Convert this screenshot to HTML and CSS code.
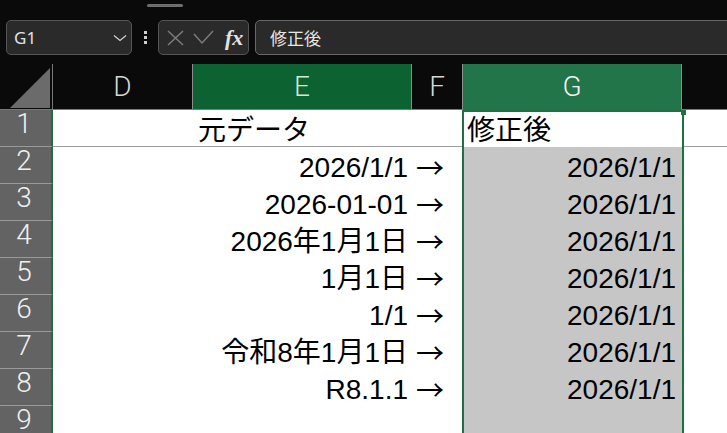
FILE: index.html
```html
<html lang="ja">
<head>
    <link rel="stylesheet" href="styles.css">
</head>
<body>
    <div class="top-edge"><span class="grip"></span></div>
    <div class="formula-row">
        <div class="name-box">
            <span>G1</span>
            <svg class="chevron" width="14" height="8" viewBox="0 0 14 8"><polyline points="1,1.5 7,6.5 13,1.5" /></svg>
        </div>
        <div class="more"><i></i><i></i><i></i></div>
        <div class="fn-buttons">
            <svg width="17" height="16" viewBox="0 0 17 16"><path d="M1 1 L16 15 M16 1 L1 15" /></svg>
            <svg width="21" height="15" viewBox="0 0 21 15"><polyline points="1,4 9,13 20,1" /></svg>
            <span class="fx">fx</span>
        </div>
        <div class="formula-input">修正後</div>
    </div>

    <div class="sheet">
        <div class="grid">
            <div class="corner"><svg width="40" height="40" viewBox="0 0 40 40"><polygon points="0,40 40,0 40,40" /></svg></div>
            <div class="col-head">D</div>
            <div class="col-head sel-dark">E</div>
            <div class="col-head">F</div>
            <div class="col-head sel-light">G</div>
            <div class="col-head last"></div>

            <div class="row-head">1</div>
            <div class="cell top"></div>
            <div class="cell top left">元データ</div>
            <div class="cell top"></div>
            <div class="cell active left">修正後</div>
            <div class="cell top"></div>

            <div class="row-head">2</div>
            <div class="cell"></div>
            <div class="cell right">2026/1/1</div>
            <div class="cell arrow">→</div>
            <div class="cell picked right">2026/1/1</div>
            <div class="cell"></div>

            <div class="row-head">3</div>
            <div class="cell"></div>
            <div class="cell right">2026-01-01</div>
            <div class="cell arrow">→</div>
            <div class="cell picked right">2026/1/1</div>
            <div class="cell"></div>

            <div class="row-head">4</div>
            <div class="cell"></div>
            <div class="cell right">2026年1月1日</div>
            <div class="cell arrow">→</div>
            <div class="cell picked right">2026/1/1</div>
            <div class="cell"></div>

            <div class="row-head">5</div>
            <div class="cell"></div>
            <div class="cell right">1月1日</div>
            <div class="cell arrow">→</div>
            <div class="cell picked right">2026/1/1</div>
            <div class="cell"></div>

            <div class="row-head">6</div>
            <div class="cell"></div>
            <div class="cell right">1/1</div>
            <div class="cell arrow">→</div>
            <div class="cell picked right">2026/1/1</div>
            <div class="cell"></div>

            <div class="row-head">7</div>
            <div class="cell"></div>
            <div class="cell right">令和8年1月1日</div>
            <div class="cell arrow">→</div>
            <div class="cell picked right">2026/1/1</div>
            <div class="cell"></div>

            <div class="row-head">8</div>
            <div class="cell"></div>
            <div class="cell right">R8.1.1</div>
            <div class="cell arrow">→</div>
            <div class="cell picked right">2026/1/1</div>
            <div class="cell"></div>

            <div class="row-head last-row">9</div>
            <div class="cell"></div>
            <div class="cell"></div>
            <div class="cell"></div>
            <div class="cell picked"></div>
            <div class="cell"></div>
        </div>
        <!-- selected column G outline -->
        <div class="selection"><span class="fill-handle"></span></div>
    </div>
</body>
</html>
```

FILE: styles.css
```css
body {
    margin: 0;
    width: 727px;
    height: 433px;
    overflow: hidden;
    background-color: #0a0a0a;
    font-family: "Liberation Sans", "Noto Sans CJK JP", sans-serif;
}
.top-edge {
    height: 20px;
}
.grip {
    display: block;
    width: 36px;
    height: 3px;
    margin-left: 147px;
    position: relative;
    top: 4px;
    background-color: #6e6e6e;
    border-radius: 2px;
}
.formula-row {
    display: flex;
    height: 35px;
    padding-left: 6px;
    margin-bottom: 9px;
}
.name-box,
.fn-buttons,
.formula-input {
    box-sizing: border-box;
    height: 35px;
    background-color: #2a2a2a;
    border: 1px solid #555;
    border-radius: 5px;
    display: flex;
    align-items: center;
}
.name-box {
    width: 126px;
    padding: 0 4px 0 7px;
    justify-content: space-between;
    color: #e2e2e2;
    font-family: "Noto Sans", sans-serif;
    font-size: 17px;
}
.chevron polyline {
    fill: none;
    stroke: #cfcfcf;
    stroke-width: 1.3;
}
.more {
    width: 3px;
    margin: 0 11px 0 12px;
    display: flex;
    flex-direction: column;
    justify-content: center;
    gap: 2px;
}
.more i {
    display: block;
    width: 3px;
    height: 3px;
    background-color: #cfcfcf;
}
.fn-buttons {
    width: 91px;
    padding-left: 8px;
    gap: 9px;
}
.fn-buttons svg * {
    fill: none;
    stroke: #7c7c7c;
    stroke-width: 1.5;
}
.fx {
    font-family: "Liberation Serif", serif;
    font-style: italic;
    font-weight: bold;
    font-size: 22px;
    color: #e4e4e4;
    margin-left: 2px;
}
.formula-input {
    flex: 1;
    margin-left: 6px;
    margin-right: -10px;
    padding-left: 14px;
    border-color: #686868;
    color: #e6e6e6;
    font-family: "Noto Sans CJK JP", sans-serif;
    font-size: 17px;
}

.sheet {
    position: relative;
}
/* last row is only partly on screen */
.grid {
    display: grid;
    grid-template-columns: 53px 140px 219px 51px 219px 45px;
    grid-template-rows: 46px repeat(8, 37px) 27px;
}
.corner {
    box-sizing: border-box;
    border-right: 1px solid #777;
    border-bottom: 1px solid #777;
    padding: 4px 0 0 10px;
}
.corner polygon {
    fill: #6b6b6b;
}
.col-head {
    box-sizing: border-box;
    border-right: 1px solid #8c8c8c;
    border-bottom: 1px solid #7a7a7a;
    text-align: center;
    font-family: Roboto, sans-serif;
    font-weight: 300;
    font-size: 28px;
    line-height: 46px;
    color: #d6d6d6;
}
.col-head.sel-dark {
    background-color: #0c6331;
    color: #d4e6d9;
}
.col-head.sel-light {
    background-color: #227449;
    border-bottom-color: #227449;
    color: #f4f4f4;
}
.col-head.last {
    border-right: none;
}
.row-head {
    box-sizing: border-box;
    background-color: #636363;
    border-bottom: 1px solid #9a9a9a;
    border-right: 2px solid #1f6e43;
    padding: 2px 3px 0 0;
    text-align: center;
    font-family: Roboto, sans-serif;
    font-weight: 300;
    font-size: 28px;
    line-height: 24px;
    color: #f0f0f0;
}
.row-head.last-row {
    border-bottom: none;
}
.cell {
    box-sizing: border-box;
    background-color: #fff;
    color: #000;
    font-size: 28px;
    line-height: 33px;
    padding-top: 4px;
    white-space: nowrap;
}
.cell.top {
    border-bottom: 1px solid #9d9d9d;
}
.cell.left {
    padding-left: 5px;
}
.cell.active.left {
    padding-left: 4px;
}
.cell.right {
    text-align: right;
    padding-right: 4px;
}
.cell.arrow {
    padding-left: 4px;
    font-family: "Noto Sans CJK JP", sans-serif;
}
.cell.picked {
    background-color: #c6c6c6;
}
.cell.picked.right {
    padding-right: 6px;
}
.selection {
    position: absolute;
    left: 462px;
    top: 46px;
    width: 222px;
    bottom: 0;
    box-sizing: border-box;
    border: 2px solid #1f7145;
    border-bottom: none;
}
.fill-handle {
    position: absolute;
    right: -4px;
    top: -2px;
    width: 5px;
    height: 5px;
    background-color: #1f7145;
}
```
